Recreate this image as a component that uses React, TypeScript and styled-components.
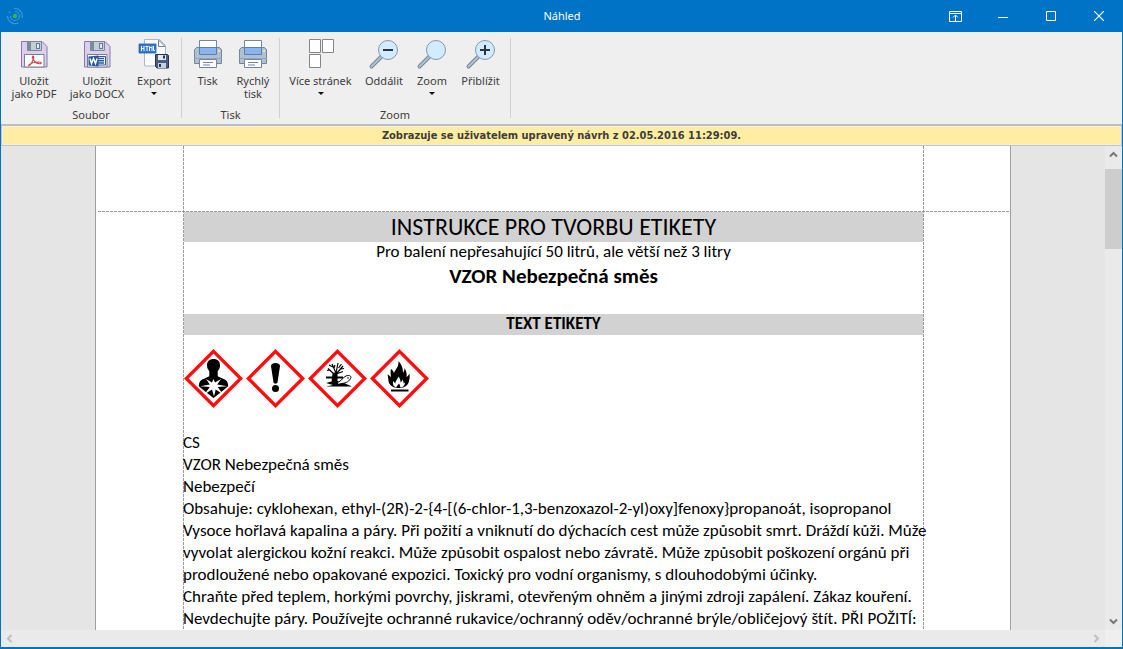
import React from "react";
import styled, { createGlobalStyle } from "styled-components";

const GlobalStyle = createGlobalStyle`
  *, *::before, *::after { box-sizing: border-box; }
  body { margin: 0; background: #0173c7; }
  button { font: inherit; color: inherit; background: none; border: 0; padding: 0; margin: 0; }
  svg { display: block; }
`;

const uiFont = `"Noto Sans", "Open Sans", sans-serif`;

const Window = styled.div`
  display: flex;
  flex-direction: column;
  height: 100vh;
  border: solid #0173c7;
  border-width: 0 1px 2px;
  background: #efefef;
  color: #3c3c3c;
  font: 11px/13px ${uiFont};
`;

const TitleBar = styled.header`
  display: grid;
  grid-template-columns: 1fr auto 1fr;
  align-items: center;
  flex: none;
  height: 32px;
  margin-right: -1px;
  background: #0173c7;
  color: #fff;
`;

const AppMark = styled.div`
  padding-left: 5px;
`;

const Title = styled.h1`
  margin: 0;
  padding-bottom: 2px;
  font-size: 11px;
  font-weight: 400;
`;

const WindowControls = styled.div`
  display: flex;
  justify-content: flex-end;
`;

const ControlButton = styled.button`
  display: grid;
  place-items: center;
  width: 48px;
  height: 32px;
`;

const Ribbon = styled.nav`
  display: flex;
  flex: none;
  height: 94px;
  padding-top: 6px;
  border-bottom: 2px solid #bdbdbd;
`;

const Group = styled.section`
  display: flex;
  flex-direction: column;
  justify-content: space-between;
  height: 80px;
  padding: 0 3px;
  border-right: 1px solid #d0d0d0;
`;

const GroupButtons = styled.div`
  display: flex;
`;

const GroupLabel = styled.h2`
  margin: 0;
  font-size: 11px;
  font-weight: 400;
  line-height: 6px;
  text-align: center;
`;

const ToolButton = styled.button<{ $width: number }>`
  display: flex;
  flex-direction: column;
  align-items: center;
  width: ${(p) => p.$width}px;
  line-height: 13px;
  white-space: pre-line;
  text-align: center;
`;

const ToolLabel = styled.span`
  padding-top: 4px;
`;

const Caret = styled.span`
  margin-top: 5px;
  border: solid transparent;
  border-width: 3px 3px 0;
  border-top-color: #111;
`;

const Notice = styled.div`
  flex: none;
  border: 1px solid #c4c4c4;
  border-top: 0;
  padding: 1px;
  background: #efefef;
`;

const NoticeText = styled.p`
  margin: 0;
  padding-top: 1px;
  background: #ffeda4;
  text-align: center;
  font: bold 11px/16px "DejaVu Sans Condensed", "DejaVu Sans", sans-serif;
`;

const Viewer = styled.main`
  display: grid;
  grid-template-columns: minmax(0, 1fr) 17px;
  grid-template-rows: minmax(0, 1fr) 17px;
  flex: 1;
  min-height: 0;
`;

const Canvas = styled.div`
  display: flex;
  justify-content: center;
  overflow: hidden;
  background: #e5e5e5;
`;

const Page = styled.article`
  flex: none;
  width: 916px;
  border: solid #a0a0a0;
  border-width: 0 1px;
  padding: 65px 86px 0 88px;
  background:
    repeating-linear-gradient(90deg, #999 0 3px, transparent 3px 4px) 2px 65px / calc(100% - 3px) 1px no-repeat,
    repeating-linear-gradient(#999 0 3px, transparent 3px 4px) 87px 0 / 1px 100% no-repeat,
    repeating-linear-gradient(#999 0 3px, transparent 3px 4px) calc(100% - 86px) 0 / 1px 100% no-repeat,
    #fff;
  color: #000;
  font: 17px/22px Carlito, Lato, sans-serif;
  font-variant-ligatures: none;
`;

const Sheet = styled.div`
  padding-top: 1px;
  margin-right: 1px;
`;

const DocTitle = styled.h2`
  margin: 0;
  background: #d2d2d2;
  font-size: 24px;
  font-weight: 400;
  line-height: 30px;
  text-align: center;
`;

const Subtitle = styled.p`
  margin: 0;
  line-height: 20px;
  text-align: center;
`;

const Product = styled.h3`
  margin: 0;
  padding-bottom: 24px;
  font-size: 21px;
  line-height: 28px;
  text-align: center;
`;

const SectionTitle = styled.h3`
  margin: 0;
  padding-bottom: 1px;
  background: #d2d2d2;
  font-size: 17px;
  line-height: 20px;
  text-align: center;
`;

const Pictograms = styled.div`
  display: flex;
  gap: 2px;
  padding: 14px 0 23px;
`;

const Line = styled.p`
  margin: 0 0 0 -1px;
  white-space: nowrap;
`;

const VerticalBar = styled.div`
  display: flex;
  flex-direction: column;
  background: #eaeaea;
`;

const HorizontalBar = styled.div`
  display: flex;
  justify-content: space-between;
  background: #eaeaea;
`;

const ScrollButton = styled.button<{ $faint?: boolean }>`
  display: grid;
  place-items: center;
  flex: none;
  width: 17px;
  height: 17px;
  color: ${(p) => (p.$faint ? "#bfbfbf" : "#777")};
`;

const Track = styled.div`
  flex: 1;
  padding-top: 6px;
`;

const Thumb = styled.div`
  height: 18%;
  background: #cdcdcd;
`;

const Corner = styled.div`
  background: #efefef;
`;

const Floppy = ({ children }: { children: React.ReactNode }) => (
  <svg width="32" height="32" viewBox="0 0 32 32" aria-hidden="true">
    <path d="M3.5 3.5h20.500l5 5v20.500h-25.500z" fill="#dacfee" stroke="#8b78a5" />
    <path d="M9.500 3.500h14v9h-14z" fill="#c3ccd7" stroke="#7b8797" />
    <path d="M10 4h3v8h-3z" fill="#7b8b9d" />
    <path d="M18 5h4v6h-4z" fill="#66788c" />
    <path d="M19 6h2v4h-2z" fill="#e3e9f0" />
    <path d="M6.500 16.500h19.500v12.500h-19.500z" fill="#fff" stroke="#75808f" />
    {children}
  </svg>
);

const PdfIcon = () => (
  <Floppy>
    <path
      d="M15 18c-1.500 0 0 3 1 4.500 1.500 2.500 4 3.500 6.500 3.200 1.500-.3.500-1.700-1.500-1.700-4 0-7.500 1-9.500 2.500-1.500 1.200-.5 1.700.8.2C14.500 24.500 17 18 15 18z"
      fill="none"
      stroke="#cf4a4a"
      strokeWidth="1.200"
    />
  </Floppy>
);

const DocxIcon = () => (
  <Floppy>
    <path d="M16 18.500h8.500v8.500H16" fill="#fff" stroke="#2b579a" />
    <path d="M17 20.500h6M17 22.800h6M17 25h6" stroke="#2b579a" strokeWidth="1.400" />
    <path d="M7.500 18.500l10-1v11l-10-1z" fill="#2b579a" />
    <path d="M9 20.500l1.500 5 2-5 2 5 1.500-5" fill="none" stroke="#fff" strokeWidth="1.500" />
  </Floppy>
);

const ExportIcon = () => (
  <svg width="32" height="32" viewBox="0 0 32 32" aria-hidden="true">
    <path d="M6.500 1.500h15l6 6v20.500h-21z" fill="#f9fbff" stroke="#a9b6ce" />
    <path d="M20.500 2v6.500h6.500z" fill="#fff" stroke="#71809b" />
    <path d="M1 6h17v9H1z" fill="#2f79cf" stroke="#1e61b3" strokeWidth=".8" />
    <path
      d="M3.500 8v5M6 8v5M3.500 10.500H6M7.500 8.500h3M9 8.500V13M11.500 13V8.500l1.200 1.500 1.300-1.500V13M15.500 8v4.500h1.500"
      fill="none"
      stroke="#fff"
    />
    <path d="M17.500 16.500h12l1 1v12.500h-11.500l-1.500-1.500z" fill="#4c5d80" stroke="#26344f" />
    <path d="M20 17h8v5h-8z" fill="#dfe8f4" />
    <path d="M25 17.500h2v3h-2z" fill="#26344f" />
    <path d="M20 25h8v5h-8z" fill="#c4d1e4" />
    <path d="M21 26h2v3h-2z" fill="#26344f" />
  </svg>
);

const PrinterIcon = () => (
  <svg width="32" height="32" viewBox="0 0 32 32" aria-hidden="true">
    <path d="M4.500 9.500h23l2 2v14h-27v-14z" fill="#afc0d3" stroke="#71859c" />
    <path d="M2.500 20.500h27" stroke="#91a5bb" />
    <path d="M7.500 2.500h17v8h-17z" fill="#fff" stroke="#71859c" />
    <path d="M7.500 9.500h17v7h-17z" fill="#8ab5f0" stroke="#5c7fae" />
    <path d="M7.500 21.500h17v8h-17z" fill="#fff" stroke="#71859c" />
    <path d="M11 24.500h10M11 27h7" stroke="#71859c" />
    <path d="M26 12h2v2h-2z" fill="#f7e3a0" />
  </svg>
);

const PagesIcon = () => (
  <svg width="32" height="32" viewBox="0 0 32 32" aria-hidden="true">
    <g fill="#fff" stroke="#858585">
      <path d="M4.500 1.500h11v13h-11zM17.500 1.500h11v13h-11zM4.500 16.500h11v13h-11z" />
    </g>
  </svg>
);

const Lens = ({ sign }: { sign?: "plus" | "minus" }) => (
  <svg width="32" height="32" viewBox="0 0 32 32" aria-hidden="true">
    <path d="M3.500 28.500L14 18" stroke="#75889b" strokeWidth="4" strokeLinecap="round" />
    <path d="M3.500 28.500L14 18" stroke="#b1c1d1" strokeWidth="2" strokeLinecap="round" />
    <circle cx="20" cy="12" r="9.500" fill="#d2ebff" stroke="#8298ae" />
    {sign && <path d={sign === "plus" ? "M15 12h10M20 7v10" : "M15 12h10"} stroke="#2d3640" strokeWidth="2" />}
  </svg>
);

const AppIcon = () => (
  <svg width="18" height="18" viewBox="0 0 18 18" aria-hidden="true">
    <circle cx="9" cy="9" r="2.200" fill="#39b54a" />
    <g fill="none" stroke="#3d97d8" strokeWidth="1.200">
      <path d="M9 4.500A4.500 4.500 0 1 1 4.500 9M8 1.500A7.500 7.500 0 0 1 16 11M1.500 9A7.500 7.500 0 0 0 12.500 15.700M4 4.500A7 7 0 0 0 3 6" />
    </g>
  </svg>
);

const Diamond = ({ label, children }: { label: string; children: React.ReactNode }) => (
  <svg width="60" height="60" viewBox="0 0 60 60" role="img" aria-label={label}>
    <path d="M29.500 2.300L56.700 29.500 29.500 56.700 2.300 29.500z" fill="#fff" stroke="#ff0d0d" strokeWidth="3.300" />
    {children}
  </svg>
);

const HealthHazard = () => (
  <Diamond label="GHS08">
    <path
      d="M29.500 10c4.200 0 6.700 2.700 6.500 6.700-.1 2.500-1.300 4-2.300 5.500v5l7.500 3.500c2.500 1.500 3 4 3 6.500L36 44l-6.500 5-6.500-5-8.200-6.800c0-2.500.5-5 3-6.500l7.500-3.500v-5c-1-1.500-2.200-3-2.300-5.500-.2-4 2.300-6.700 6.500-6.700z"
      fill="#000"
    />
    <path
      d="M29.500 30l1.500 3.500 6-3.500-3.800 5.500 10 1.800-9.500.7 5.500 7.500-7.500-5-1.700 7-2-7-7.700 5 5.500-7.500-9.500-.7 9.500-1.800-3.800-5.500 6 3.500z"
      fill="#fff"
    />
  </Diamond>
);

const Exclamation = () => (
  <Diamond label="GHS07">
    <path d="M25 17c0-4 9-4 9 0l-2.500 16.500c-.3 1.500-3.700 1.500-4 0z" fill="#000" />
    <circle cx="29.500" cy="39.500" r="3.500" fill="#000" />
  </Diamond>
);

const Environment = () => (
  <Diamond label="GHS09">
    <path d="M18 28.500h17" stroke="#000" strokeWidth="2" />
    <path d="M25 33.500l1-9M28 33.500V23" stroke="#000" strokeWidth="3" />
    <path
      d="M26 25l-6-5.500M28 24l-4-9M28 24l2-10M29 24l6-7M28 25l7-2.500M22 21l-3 .5M30.500 19l3-4M26 19l1-3M33 20l3-.5M25 18l-4-2"
      stroke="#000"
      strokeWidth="1.200"
      fill="none"
    />
    <path d="M18 34l9-2.500 4 2.500h5l8 3.500H18l7-1.500z" fill="#000" />
    <path d="M31 33l6-5.500c3-1.800 6-1 6 1-1.500 4-5 5.500-9 6l-5 1 1-2-2-1.500z" fill="#fff" stroke="#000" />
    <circle cx="40" cy="29" r=".8" fill="#000" />
  </Diamond>
);

const Flame = () => (
  <Diamond label="GHS02">
    <path
      d="M28 39c-5 0-9-3-9.500-7-.2-3-.5-4.500-1-6.500 1.500.5 2.700 1.500 3.200 3 .5-3-.7-4.500.3-8.500 1.500 1 2.500 2.500 3 4 1.500-4 5-6 4.500-12 3 3 4.500 7 4.500 11.500 1-1 1.500-2.500 1.500-4.500 2 3 2.500 6 2 9 1-.5 2-1.500 3-3.500.5 4.500 0 5.500-.5 7.500-.5 4-4.500 7-9 7z"
      fill="#000"
    />
    <path
      d="M26 38.500c-2.500-1-3.500-3-3-6.500 1 .7 1.800 1.600 2.200 2.700.3-2.700 2-4.200 3.300-7.200 1.200 2 2.200 3.500 2 6 1-.8 1.700-1.700 2-3 1 1.700 1.200 2.700 1 4l1.500-1c0 2.500-1.500 4.700-4.500 5-.8-1-.2-3-1.500-4-1.200 1.200-2.200 2.500-3 4z"
      fill="#fff"
    />
    <path d="M21 41.500h17.500" stroke="#000" strokeWidth="2" />
  </Diamond>
);

const Chevron = ({ angle }: { angle: number }) => (
  <svg width="9" height="9" viewBox="0 0 9 9" aria-hidden="true">
    <path d="M1 6.500L4.500 3 8 6.500" transform={`rotate(${angle} 4.500 4.500)`} fill="none" stroke="currentColor" strokeWidth="2" />
  </svg>
);

type ToolProps = { label: string; width: number; icon: React.ReactNode; menu?: boolean };

const Tool = ({ label, width, icon, menu }: ToolProps) => (
  <ToolButton type="button" $width={width}>
    {icon}
    <ToolLabel>{label}</ToolLabel>
    {menu && <Caret />}
  </ToolButton>
);

const groups: { name: string; tools: ToolProps[] }[] = [
  {
    name: "Soubor",
    tools: [
      { label: "Uložit\njako PDF", width: 60, icon: <PdfIcon /> },
      { label: "Uložit\njako DOCX", width: 66, icon: <DocxIcon /> },
      { label: "Export", width: 48, icon: <ExportIcon />, menu: true },
    ],
  },
  {
    name: "Tisk",
    tools: [
      { label: "Tisk", width: 45, icon: <PrinterIcon /> },
      { label: "Rychlý\ntisk", width: 46, icon: <PrinterIcon /> },
    ],
  },
  {
    name: "Zoom",
    tools: [
      { label: "Více stránek", width: 75, icon: <PagesIcon />, menu: true },
      { label: "Oddálit", width: 52, icon: <Lens sign="minus" /> },
      { label: "Zoom", width: 44, icon: <Lens />, menu: true },
      { label: "Přiblížit", width: 53, icon: <Lens sign="plus" /> },
    ],
  },
];

const lines = [
  "CS",
  "VZOR Nebezpečná směs",
  "Nebezpečí",
  "Obsahuje: cyklohexan, ethyl-(2R)-2-{4-[(6-chlor-1,3-benzoxazol-2-yl)oxy]fenoxy}propanoát, isopropanol",
  "Vysoce hořlavá kapalina a páry. Při požití a vniknutí do dýchacích cest může způsobit smrt. Dráždí kůži. Může",
  "vyvolat alergickou kožní reakci. Může způsobit ospalost nebo závratě. Může způsobit poškození orgánů při",
  "prodloužené nebo opakované expozici. Toxický pro vodní organismy, s dlouhodobými účinky.",
  "Chraňte před teplem, horkými povrchy, jiskrami, otevřeným ohněm a jinými zdroji zapálení. Zákaz kouření.",
  "Nevdechujte páry. Používejte ochranné rukavice/ochranný oděv/ochranné brýle/obličejový štít. PŘI POŽITÍ:",
];

export default function App() {
  return (
    <>
      <GlobalStyle />
      <Window>
        <TitleBar>
          <AppMark>
            <AppIcon />
          </AppMark>
          <Title>Náhled</Title>
          <WindowControls>
            <ControlButton type="button" aria-label="Skrýt pás karet">
              <svg width="13" height="11" viewBox="0 0 13 11" fill="none" stroke="#fff">
                <path d="M.5.5h12v10H.5zM.5 2.500h12M6.500 10V4.500M4 6.500l2.500-2.500L9 6.500" />
              </svg>
            </ControlButton>
            <ControlButton type="button" aria-label="Minimalizovat">
              <svg width="10" height="3" viewBox="0 0 10 3" stroke="#fff">
                <path d="M0 2.500h10" />
              </svg>
            </ControlButton>
            <ControlButton type="button" aria-label="Maximalizovat">
              <svg width="10" height="10" viewBox="0 0 10 10" fill="none" stroke="#fff">
                <path d="M.5.5h9v9h-9z" />
              </svg>
            </ControlButton>
            <ControlButton type="button" aria-label="Zavřít">
              <svg width="10" height="10" viewBox="0 0 10 10" stroke="#fff" strokeWidth="1.200">
                <path d="M0 0l10 10M10 0L0 10" />
              </svg>
            </ControlButton>
          </WindowControls>
        </TitleBar>

        <Ribbon>
          {groups.map((g) => (
            <Group key={g.name}>
              <GroupButtons>
                {g.tools.map((t) => (
                  <Tool key={t.label} {...t} />
                ))}
              </GroupButtons>
              <GroupLabel>{g.name}</GroupLabel>
            </Group>
          ))}
        </Ribbon>

        <Notice>
          <NoticeText>Zobrazuje se uživatelem upravený návrh z 02.05.2016 11:29:09.</NoticeText>
        </Notice>

        <Viewer>
          <Canvas>
            <Page>
              <Sheet>
                <DocTitle>INSTRUKCE PRO TVORBU ETIKETY</DocTitle>
                <Subtitle>Pro balení nepřesahující 50 litrů, ale větší než 3 litry</Subtitle>
                <Product>VZOR Nebezpečná směs</Product>
                <SectionTitle>TEXT ETIKETY</SectionTitle>
                <Pictograms>
                  <HealthHazard />
                  <Exclamation />
                  <Environment />
                  <Flame />
                </Pictograms>
                {lines.map((l) => (
                  <Line key={l}>{l}</Line>
                ))}
              </Sheet>
            </Page>
          </Canvas>
          <VerticalBar>
            <ScrollButton type="button" aria-label="Nahoru">
              <Chevron angle={0} />
            </ScrollButton>
            <Track>
              <Thumb />
            </Track>
            <ScrollButton type="button" aria-label="Dolů">
              <Chevron angle={180} />
            </ScrollButton>
          </VerticalBar>
          <HorizontalBar>
            <ScrollButton type="button" aria-label="Doleva" $faint>
              <Chevron angle={-90} />
            </ScrollButton>
            <ScrollButton type="button" aria-label="Doprava" $faint>
              <Chevron angle={90} />
            </ScrollButton>
          </HorizontalBar>
          <Corner />
        </Viewer>
      </Window>
    </>
  );
}
